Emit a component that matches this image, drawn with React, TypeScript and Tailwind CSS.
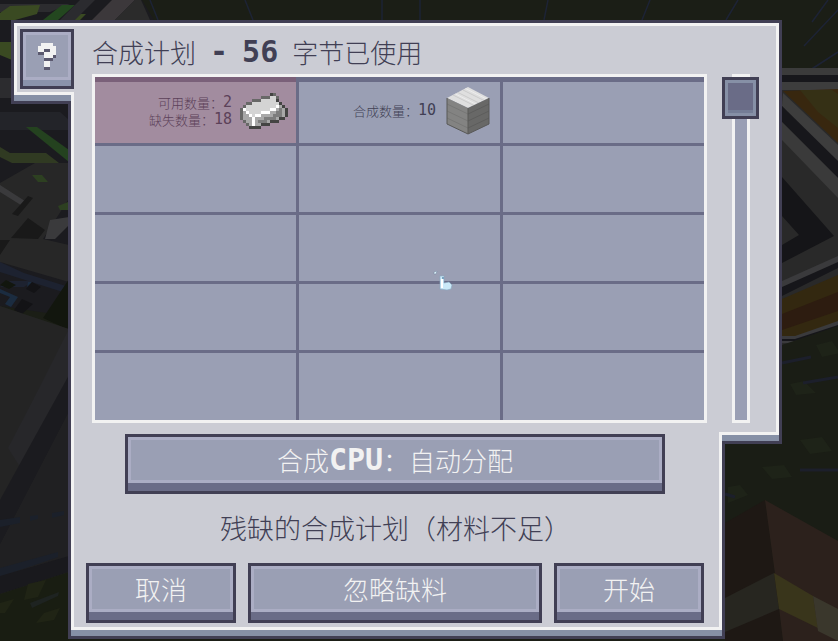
import React from "react";

const INGOT = [
  "..........DE....",
  ".......EEELLE...",
  "....EEELLLLLD...",
  "..EELLLLLLLLLD..",
  ".ELLLLLLLLLLWMD.",
  "EWLLLLLLLLWWMGMD",
  "EMWLLLLWWWMMGGMD",
  "EMMWLWWMMMMGGGMD",
  "EMMMWMMMGGGGMDD.",
  ".EMMWMGGGMDDD...",
  "..EMWMMDDD......",
  "...DDDD.........",
];

const QUESTION = [
  ".XXXX.",
  "XXXXXX",
  "XXSSXX",
  "SSXXXX",
  "..XXXS",
  "..SSS.",
  "..XX..",
  "..XX..",
  "..SS..",
];

const SHADES: Record<string, string> = {
  D: "#444443",
  E: "#686867",
  G: "#7d7d7d",
  M: "#a8a8a8",
  L: "#d4d4d4",
  W: "#ffffff",
  X: "#f2f2f2",
  S: "#5a586e",
};

function Pixels({ rows, top }: { rows: string[]; top: number }) {
  return (
    <>
      {rows.flatMap((row, y) =>
        row.split("").map((c, x) =>
          c === "." ? null : <rect key={`${x}-${y}`} x={x} y={y + top} width={1} height={1} fill={SHADES[c]} />,
        ),
      )}
    </>
  );
}

function Ingot() {
  return (
    <svg viewBox="0 0 16 16" className="size-12 shrink-0" shapeRendering="crispEdges" aria-hidden="true">
      <Pixels rows={INGOT} top={2} />
    </svg>
  );
}

function IronBlock() {
  return (
    <svg viewBox="0 0 48 48" className="size-12 shrink-0" aria-hidden="true">
      <path d="M24 0 45 11 24 21 3 11Z" fill="#dfdfdf" />
      <path d="m19 3 21 10.500M14 5.500l21 10.500M9 8 30 18.500" stroke="#cbcbcb" strokeWidth="1" />
      <path d="m21.500 1.500 21 10.500M11.500 7l21 10.500" stroke="#ececec" strokeWidth="1" />
      <path d="M3 11 24 21V47L3 37Z" fill="#838382" />
      <path d="M24 21 45 11V37L24 47Z" fill="#686867" />
      <path d="m3 17 21 10M3 24l21 10M3 31l21 10" stroke="#777776" strokeWidth="1" />
      <path d="M45 17 24 27M45 24 24 34M45 31 24 41" stroke="#5d5d5c" strokeWidth="1" />
      <path d="M3 11v26l21 10 21-10V11M24 21v26" fill="none" stroke="#585857" strokeWidth="1" />
    </svg>
  );
}

function Backdrop() {
  return (
    <svg
      className="absolute inset-0 -z-10 h-full w-full"
      viewBox="0 0 838 641"
      preserveAspectRatio="none"
      aria-hidden="true"
    >
      <rect width="838" height="641" fill="#1b1e16" />
      {/* cables and machines on the left */}
      <path d="M0 0H142L160 30V330L0 306Z" fill="#1b1b1f" />
      <path d="M0 4H70L50 12H0ZM0 78H14V98H0Z" fill="#2c2c2f" />
      <path d="M10 6 40 5 37 14 15 20H0V13ZM0 42H12V60L0 55ZM70 14H86L80 20H64Z" fill="#3a4a22" />
      <path d="M62 5H75L58 20H43Z" fill="#23471f" />
      <path d="M95 0H80L60 20H75Z" fill="#2b2b2f" />
      <path d="M112 0H135L115 20H92Z" fill="#3c383b" />
      <path d="M135 0H141L150 20H115Z" fill="#2b2b2b" />
      <path d="M0 112H60L69 120V130H0Z" fill="#232429" />
      <path d="M26 127H37L69 150V162Z" fill="#24421f" />
      <path d="M0 147 10 153H46L59 163H12L0 157Z" fill="#303a22" />
      <path d="M0 183 35 163H68V200L43 239 69 245V282L0 262Z" fill="#272727" />
      <path d="M32 175H42L48 182H38ZM58 206 68 202V210H60Z" fill="#2d4021" />
      <path d="M0 185 28 203 24 207 0 192ZM50 220 69 217V225L55 239H45Z" fill="#3a3a3c" />
      <path d="M11 238 28 218 45 230 38 239ZM12 214 28 196 33 198 18 216ZM0 240H10L0 255Z" fill="#191919" />
      <path d="M0 262 24 273 69 287V294L0 272ZM10 281H33L24 287H0Z" fill="#1d2230" />
      <path d="M0 289 18 297 11 307 5 304 10 297 0 293ZM28 282H32L27 287Z" fill="#1b2c40" />
      <path d="M0 285 6 280 16 285 9 289ZM43 318 69 279V330Z" fill="#12160e" />
      <path d="M22 299 33 304 22 314 14 310ZM32 282 41 287 34 293 26 289Z" fill="#131316" />
      <path d="M0 306 69 329V600H0Z" fill="#242424" />
      <path d="M32 402 69 329V376L44 432L22 470 8 448Z" fill="#27272a" />
      <path d="M69 375V412L0 545V500L22 460Z" fill="#1b1b1f" />
      <path d="M69 412V557L0 574V545Z" fill="#202022" />
      <path d="M0 520 20 517V523L0 527ZM52 513 64 511V515L52 518ZM30 516 38 515V519L30 521ZM0 568 58 552V557L0 577Z" fill="#1b202a" />
      <path d="M0 576 69 556V572L0 594Z" fill="#19191d" />
      <path d="M0 594 69 572V641H0Z" fill="#191d12" />
      <path d="m28 584 18-4-8 17-14 3ZM0 603l14-4-9 14H0ZM44 613l16-5-6 12-18 3Z" fill="#202415" />
      <path d="m30 603 29-11-1 4-26 12Z" fill="#1e2321" />
      {/* rain over the grass */}
      <path
        d="m150 0 8 20M245 0l8 20M382 0v20M420 0v20M548 0l-4 20M650 0l-8 20M738 0l-12 20M828 0l-16 22M838 10l-34 36M838 52l-34 22"
        stroke="#1d2335"
        strokeWidth="1.500"
      />
      {/* conduit on the right */}
      <path d="M782 68H838V340L782 345Z" fill="#292929" />
      <path d="M782 68H838V75H782Z" fill="#3b3b3b" />
      <path d="M782 75H838V82H782Z" fill="#17171b" />
      <path d="M782 82H838V90H782Z" fill="#3d3d3d" />
      <path d="M783 91 838 89V143Z" fill="#38270f" />
      <path d="M800 90H832L838 94V128L818 112Z" fill="#353015" />
      <path d="M783 93 838 145V172L782 106Z" fill="#3d3d3d" />
      <path d="M782 106 838 161V178L782 122Z" fill="#17171b" />
      <path d="M782 122 838 178V198L782 140Z" fill="#3a3a3a" />
      <path d="M782 177 834 236 782 263V245L799 235 782 216Z" fill="#151518" />
      <path d="M782 281 838 256V264L782 290Z" fill="#3a3a3c" />
      <path d="M782 287 838 262V268L782 296Z" fill="#16161a" />
      <path d="M782 299 838 275V323L800 336H782Z" fill="#332810" />
      <path d="M782 314 838 292V311L782 330Z" fill="#2d1c10" />
      <path d="M782 336H795L838 321V328L795 343H782Z" fill="#3a3a3c" />
      <path d="M782 339H795L838 325V328L795 341H782Z" fill="#16161a" />
      <path d="M782 345 838 326V560H725V444H782Z" fill="#1a1d15" />
      <path d="m816 345 16-4 8 12-18 4ZM790 384l14-3 12 12-20 2ZM762 467l22-2 8 12-20 2ZM800 440l22-3 10 14-22 3ZM728 487l12-2 8 10-20 8Z" fill="#1e2318" />
      <path d="m782 363 29-6M803 383l35-6M800 470h38M725 494l10 3" stroke="#1c1f2b" strokeWidth="3" />
      {/* wooden corner */}
      <path d="M725 523 765 500 775 574 783 641H725Z" fill="#1e1814" />
      <path d="M765 500 838 541V641H783L775 574Z" fill="#2c211c" />
      <path d="M725 598 774 573 779 609 725 632Z" fill="#272620" />
      <path d="M774 573 813 596 818 628 779 609Z" fill="#39351b" />
      <path d="M813 596 838 609V641L818 631Z" fill="#3a372c" />
    </svg>
  );
}

function PanelButton({ children, className }: { children: React.ReactNode; className: string }) {
  return (
    <button
      type="button"
      className={`flex h-[60px] flex-col border-[3px] border-[#413f54] bg-[#6a6c87] text-[26px] leading-none text-[#f2f2f2] ${className}`}
    >
      <span className="flex h-[46px] w-full items-center justify-center border-[3px] border-[#abadc4] bg-[#9a9fb4]">
        {children}
      </span>
    </button>
  );
}

function Amount({ label, value }: { label: string; value: number }) {
  return (
    <div className="flex items-center justify-end">
      <dt>{label}：</dt>
      <dd className="font-['DejaVu_Sans_Mono',monospace] text-[15px] leading-[17px]">{value}</dd>
    </div>
  );
}

const EMPTY_SLOTS = Array.from({ length: 12 }, (_, i) => i);

export default function App() {
  return (
    <div className="relative isolate flex min-h-screen items-start overflow-hidden pt-5 pr-14 pl-[11px] font-['Noto_Sans_CJK_SC',sans-serif] font-light text-[#413f54]">
      <Backdrop />

      <aside className="z-10 w-[60px] shrink-0 border-y-[3px] border-l-[3px] border-[#413f54] bg-[#8690a6] pb-[6px]">
        <div className="-mr-[3px] border-y-[3px] border-l-[3px] border-[#f2f2f2] bg-[#cbccd4] py-[3px] pl-[3px]">
          <button
            type="button"
            aria-label="帮助"
            className="block h-[60px] w-[54px] border-[3px] border-[#413f54] bg-[#8a93ab]"
          >
            <span className="mb-[6px] flex h-12 items-center justify-center border-[3px] border-[#abadc4] bg-[#9a9fb4]">
              <svg viewBox="0 0 6 9" className="h-[27px] w-[18px]" shapeRendering="crispEdges" aria-hidden="true">
                <Pixels rows={QUESTION} top={0} />
              </svg>
            </span>
          </button>
        </div>
      </aside>

      <main className="-ml-[3px] min-w-0 flex-1 border-[3px] border-[#413f54] bg-[#8690a6] pb-[6px]">
        <div className="border-[3px] border-[#f2f2f2] bg-[#cbccd4] pr-3 pb-1 pl-[18px]">
          <h1 className="flex h-12 items-center gap-[14px] pt-1 text-[26px] leading-none whitespace-nowrap">
            <span>合成计划</span>
            <span className="font-['DejaVu_Sans_Mono',monospace] text-[30px] font-bold">-</span>
            <span className="font-['DejaVu_Sans_Mono',monospace] text-[30px] font-bold">56</span>
            <span>字节已使用</span>
          </h1>

          <div className="relative border-[3px] border-[#f2f2f2] bg-[#6a6c87]">
            <ul className="grid grid-cols-3 grid-rows-[66px_66px_66px_66px_67px] gap-[3px] text-[13px] leading-[17px]">
              <li className="flex items-center justify-end gap-2 border-t-[5px] border-[#7a6079] bg-[#a28c9f] pr-2 pb-1 text-[#5c4159]">
                <dl>
                  <Amount label="可用数量" value={2} />
                  <Amount label="缺失数量" value={18} />
                </dl>
                <Ingot />
              </li>
              <li className="flex items-center justify-end gap-2 border-t-[5px] border-[#6a6c87] bg-[#9a9fb4] pr-2 pb-1">
                <dl>
                  <Amount label="合成数量" value={10} />
                </dl>
                <IronBlock />
              </li>
              <li className="border-t-[5px] border-[#6a6c87] bg-[#9a9fb4]" />
              {EMPTY_SLOTS.map((i) => (
                <li key={i} className="bg-[#9a9fb4]" />
              ))}
            </ul>
            <svg
              viewBox="0 0 20 20"
              className="pointer-events-none absolute top-[194px] left-[338px] size-5"
              aria-hidden="true"
            >
              <path d="m1 1 3-1-1 3H1Z" fill="#dff2fa" stroke="#71869e" strokeWidth=".5" />
              <path d="M7 5h4v7l5-1 3 3-1 4-4 1-7-1Z" fill="#cbe9f8" stroke="#87a8c1" strokeWidth=".6" />
              <path d="M8 8h2v9H8Z" fill="#fff" />
              <path d="M9 6h2v2H9Z" fill="#7ba2bf" />
            </svg>
          </div>

          <PanelButton className="mt-[11px] mr-[42px] ml-[33px] w-[calc(100%-75px)]">
            合成<span className="font-['DejaVu_Sans_Mono',monospace] text-[30px] font-bold">CPU</span>：自动分配
          </PanelButton>

          <p className="flex h-[69px] items-center justify-center pr-2 pb-[2px] text-[27px] leading-none whitespace-nowrap">
            残缺的合成计划（材料不足）
          </p>

          <div className="-ml-[6px] mr-[3px] flex gap-3">
            <PanelButton className="w-[150px]">取消</PanelButton>
            <PanelButton className="flex-1">忽略缺料</PanelButton>
            <PanelButton className="w-[150px]">开始</PanelButton>
          </div>
        </div>
      </main>

      <aside className="z-10 -ml-[3px] w-[60px] shrink-0 border-y-[3px] border-r-[3px] border-[#413f54] bg-[#8690a6] pb-[6px]">
        <div className="-ml-[3px] border-y-[3px] border-r-[3px] border-[#f2f2f2] bg-[#cbccd4] pt-12 pb-[9px] pl-[3px]">
          <div className="grid h-[349px] w-[37px] justify-items-center">
            <div className="col-start-1 row-start-1 w-[18px] border-[3px] border-[#f2f2f2] bg-[#9a9fb4]" />
            <input
              type="range"
              aria-label="滚动"
              min={0}
              max={100}
              defaultValue={0}
              className="z-10 col-start-1 row-start-1 mt-[3px] h-[343px] w-[37px] appearance-none bg-transparent [writing-mode:vertical-lr] [&::-webkit-slider-thumb]:h-[42px] [&::-webkit-slider-thumb]:w-[37px] [&::-webkit-slider-thumb]:appearance-none [&::-webkit-slider-thumb]:border-[3px] [&::-webkit-slider-thumb]:border-[#413f54] [&::-webkit-slider-thumb]:bg-[#6a6c87] [&::-webkit-slider-thumb]:shadow-[inset_0_0_0_3px_#8690a6,inset_0_-6px_0_#747d96]"
            />
          </div>
        </div>
      </aside>
    </div>
  );
}
